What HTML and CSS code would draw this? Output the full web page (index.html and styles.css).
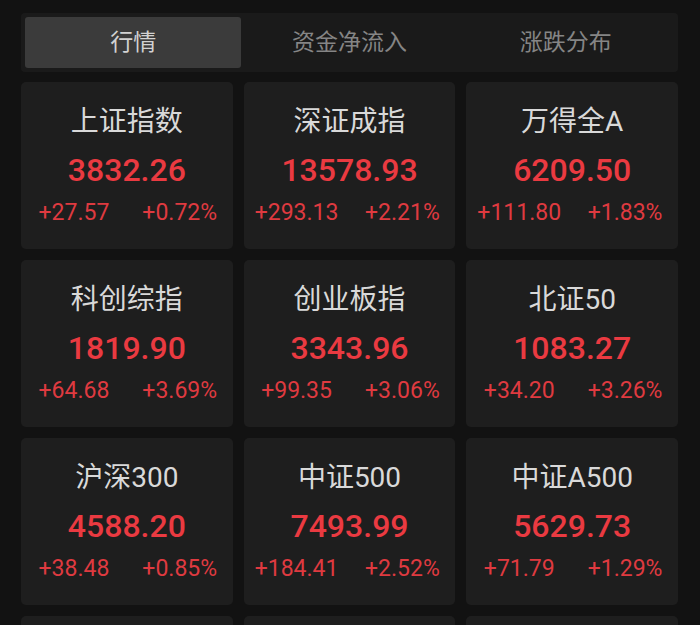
FILE: index.html
```html
<!DOCTYPE html>
<html lang="zh-CN">
<head>
    <meta charset="UTF-8">
    <meta name="viewport" content="width=device-width, initial-scale=1.0">
    <title>行情</title>
    <link rel="stylesheet" href="styles.css">
</head>
<body>
    <div class="market">
        <div class="tabs">
            <div class="tab active">行情</div>
            <div class="tab">资金净流入</div>
            <div class="tab">涨跌分布</div>
        </div>
        <div class="cards">
            <div class="card">
                <div class="name">上证指数</div>
                <div class="price">3832.26</div>
                <div class="change"><span>+27.57</span><span>+0.72%</span></div>
            </div>
            <div class="card">
                <div class="name">深证成指</div>
                <div class="price">13578.93</div>
                <div class="change"><span>+293.13</span><span>+2.21%</span></div>
            </div>
            <div class="card">
                <div class="name">万得全A</div>
                <div class="price">6209.50</div>
                <div class="change"><span>+111.80</span><span>+1.83%</span></div>
            </div>

            <div class="card">
                <div class="name">科创综指</div>
                <div class="price">1819.90</div>
                <div class="change"><span>+64.68</span><span>+3.69%</span></div>
            </div>
            <div class="card">
                <div class="name">创业板指</div>
                <div class="price">3343.96</div>
                <div class="change"><span>+99.35</span><span>+3.06%</span></div>
            </div>
            <div class="card">
                <div class="name">北证50</div>
                <div class="price">1083.27</div>
                <div class="change"><span>+34.20</span><span>+3.26%</span></div>
            </div>

            <div class="card">
                <div class="name">沪深300</div>
                <div class="price">4588.20</div>
                <div class="change"><span>+38.48</span><span>+0.85%</span></div>
            </div>
            <div class="card">
                <div class="name">中证500</div>
                <div class="price">7493.99</div>
                <div class="change"><span>+184.41</span><span>+2.52%</span></div>
            </div>
            <div class="card">
                <div class="name">中证A500</div>
                <div class="price">5629.73</div>
                <div class="change"><span>+71.79</span><span>+1.29%</span></div>
            </div>

            <div class="card"></div>
            <div class="card"></div>
            <div class="card"></div>
        </div>
    </div>
</body>
</html>
```

FILE: styles.css
```css
body {
    margin: 0;
    background-color: #121212;
    font-family: Roboto, "Noto Sans CJK SC", sans-serif;
    overflow: hidden;
}
.market {
    padding: 13px 22px 0 21px;
}

/* 顶部切换栏 */
.tabs {
    display: grid;
    grid-template-columns: repeat(3, 1fr);
    height: 59px;
    padding: 4px;
    box-sizing: border-box;
    background: #1a1a1a;
    border-radius: 4px;
}
.tab {
    display: flex;
    justify-content: center;
    align-items: center;
    padding-bottom: 5px;
    font-size: 23px;
    color: #858585;
    border-radius: 3px;
}
.tab.active {
    background: #3b3b3b;
    color: #d2d2d2;
}

/* 指数卡片 */
.cards {
    display: grid;
    grid-template-columns: repeat(3, 1fr);
    gap: 11px;
    margin-top: 10px;
}
.card {
    height: 167px;
    padding-top: 22px;
    box-sizing: border-box;
    background: #1e1e1e;
    border-radius: 5px;
    text-align: center;
}
.name {
    font-size: 28px;
    line-height: 36px;
    color: #d9d9d9;
}
.price {
    margin-top: 10px;
    font-size: 32px;
    line-height: 40px;
    font-weight: 500;
    color: #ea3a41;
}
.change {
    display: grid;
    grid-template-columns: 1fr 1fr;
    margin-top: 9px;
    font-size: 23px;
    line-height: 28px;
    color: #df3a40;
}
```
